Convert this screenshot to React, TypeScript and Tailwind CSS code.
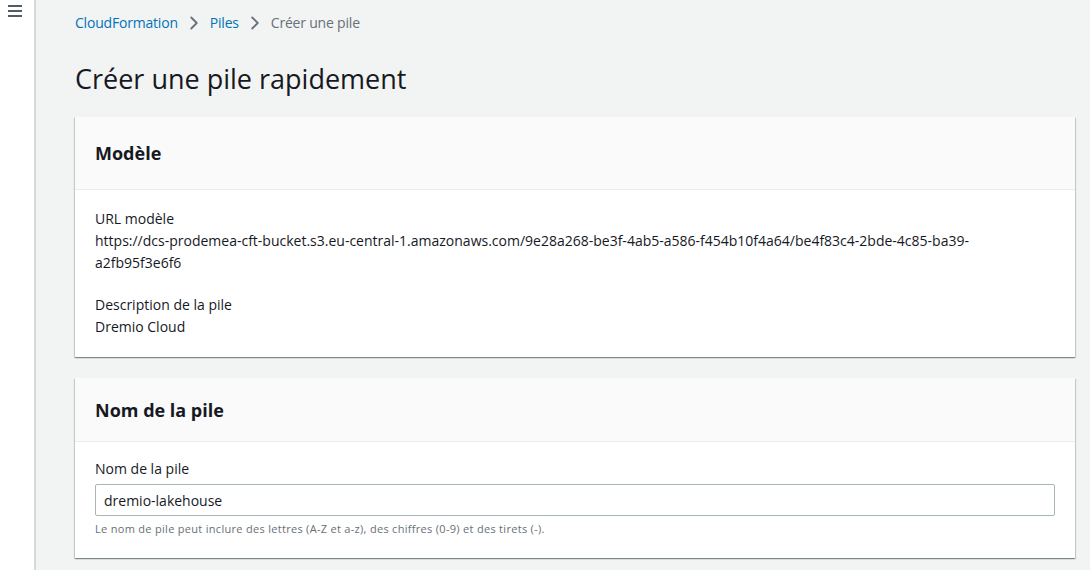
import { ChevronRight } from 'lucide-react'

const cardShadow =
  'shadow-[0_1px_1px_0_rgba(0,28,36,0.3),1px_1px_1px_0_rgba(0,28,36,0.15),-1px_1px_1px_0_rgba(0,28,36,0.15)]'

function Card({ title, headerH, children }: { title: string; headerH: string; children: React.ReactNode }) {
  return (
    <section className={`bg-white ${cardShadow}`}>
      <div className={`flex items-center border-b border-[#eaeded] bg-[#fafafa] px-5 ${headerH}`}>
        <h2 className="text-[18px] font-bold text-[#16191f]">{title}</h2>
      </div>
      <div className="px-5 pb-[19px] pt-4">{children}</div>
    </section>
  )
}

export default function App() {
  return (
    <div
      className="flex h-[570px] w-[1090px] overflow-hidden bg-[#f2f3f3] text-[14px] leading-[22px] text-[#16191f]"
      style={{ fontFamily: '"Open Sans", "Noto Sans", Arial, sans-serif' }}
    >
      {/* Side nav toggle */}
      <aside className="w-[36px] shrink-0 border-r-2 border-[#d5dbdb] bg-white">
        <button className="flex flex-col gap-[3px] px-2 pt-[5px]">
          <span className="block h-[2px] w-[14px] bg-[#545b64]" />
          <span className="block h-[2px] w-[14px] bg-[#545b64]" />
          <span className="block h-[2px] w-[14px] bg-[#545b64]" />
        </button>
      </aside>

      <main className="flex-1 pl-[39px] pr-[15px]">
        {/* Breadcrumbs */}
        <nav className="flex h-[44px] items-center gap-[5px] pt-[1px] tracking-[-0.2px]">
          <a className="text-[#0073bb]">CloudFormation</a>
          <ChevronRight size={22} strokeWidth={2} className="text-[#687078]" />
          <a className="text-[#0073bb]">Piles</a>
          <ChevronRight size={22} strokeWidth={2} className="text-[#687078]" />
          <span className="text-[#687078]">Créer une pile</span>
        </nav>

        <h1 className="flex h-[73px] items-center pb-[3px] text-[27px] font-normal leading-[36px] text-[#16191f]">
          Créer une pile rapidement
        </h1>

        <div className="flex flex-col gap-[21px]">
          <Card title="Modèle" headerH="h-[73px]">
            <div className="pt-[2px]">
              <div>URL modèle</div>
              <div className="pr-[80px] break-all">
                https://dcs-prodemea-cft-bucket.s3.eu-central-1.amazonaws.com/9e28a268-be3f-4ab5-a586-f454b10f4a64/be4f83c4-2bde-4c85-ba39-a2fb95f3e6f6
              </div>
              <div className="mt-[20px]">Description de la pile</div>
              <div>Dremio Cloud</div>
            </div>
          </Card>

          <Card title="Nom de la pile" headerH="h-[64px]">
            <div>
              <label className="block">Nom de la pile</label>
              <input
                readOnly
                value="dremio-lakehouse"
                className="mt-[4px] block h-[32px] w-full rounded-[2px] border border-[#aab7b8] px-2 text-[14px] text-[#16191f] outline-none"
              />
              <p className="mt-[3px] text-[11px] leading-[20px] tracking-[0.3px] text-[#687078]">
                Le nom de pile peut inclure des lettres (A-Z et a-z), des chiffres (0-9) et des tirets (-).
              </p>
            </div>
          </Card>
        </div>
      </main>
    </div>
  )
}
